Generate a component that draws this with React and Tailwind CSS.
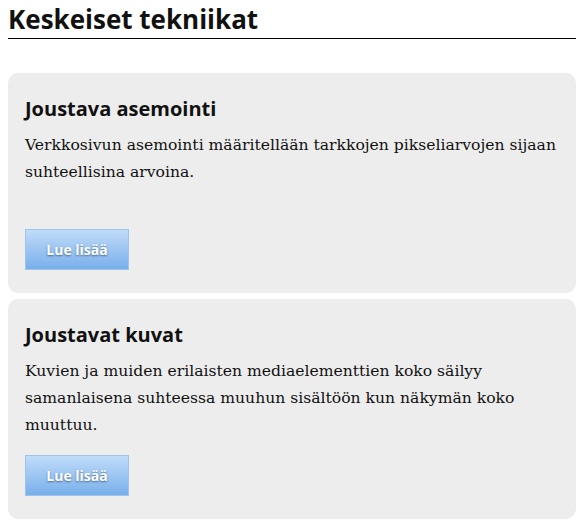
import React from 'react';

const cards = [
  {
    title: 'Joustava asemointi',
    text: 'Verkkosivun asemointi määritellään tarkkojen pikseliarvojen sijaan suhteellisina arvoina.',
  },
  {
    title: 'Joustavat kuvat',
    text: 'Kuvien ja muiden erilaisten mediaelementtien koko säilyy samanlaisena suhteessa muuhun sisältöön kun näkymän koko muuttuu.',
  },
];

const Card = ({ title, text }) => (
  <div className="flex h-[220px] flex-col rounded-[10px] bg-[#ededed] px-[17px] pt-[23px] pb-[23px]">
    <h2 className="font-['Open_Sans',sans-serif] text-[20px] leading-[26px] font-bold text-[#111]">{title}</h2>
    <p className="mt-[10px] font-['DejaVu_Serif',serif] text-[15.6px] leading-[27px] text-[#111]">{text}</p>
    <button className="mt-auto h-[41px] w-[104px] border border-[#9ec4ee] bg-gradient-to-b from-[#c0dcf9] to-[#78afeb] font-['Open_Sans',sans-serif] text-[14px] font-bold text-white [text-shadow:0_1px_2px_rgba(40,70,110,0.7)]">
      Lue lisää
    </button>
  </div>
);

export default function App() {
  return (
    <div className="min-h-[525px] bg-white px-[8px]">
      <h1 className="border-b border-black pt-[4px] pb-[3px] font-['Open_Sans',sans-serif] text-[26px] leading-[31px] font-bold text-[#111]">
        Keskeiset tekniikat
      </h1>
      <div className="mt-[34px] flex flex-col gap-[6px]">
        {cards.map((c) => (
          <Card key={c.title} {...c} />
        ))}
      </div>
    </div>
  );
}
